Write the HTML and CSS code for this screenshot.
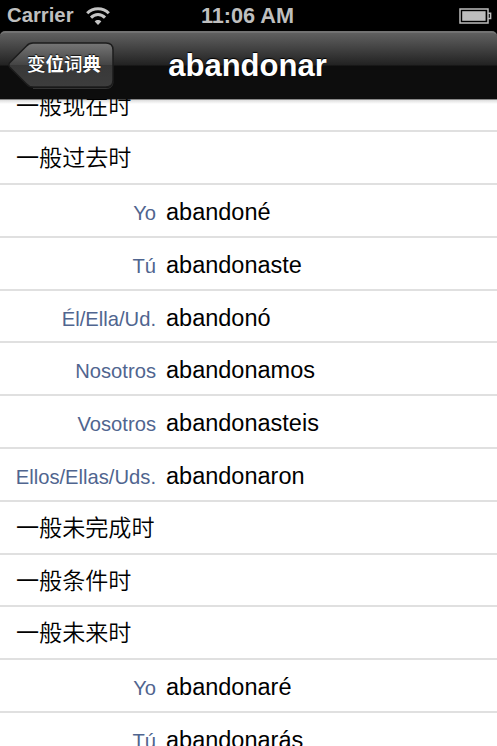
FILE: index.html
```html
<!DOCTYPE html>
<html lang="zh-CN">
  <head>
    <meta charset="UTF-8" />
    <meta name="viewport" content="width=device-width, initial-scale=1.0" />
    <title>abandonar</title>
    <link rel="stylesheet" href="styles.css">
  </head>
  <body>
    <div class="status-bar">
      <div class="carrier">
        <span>Carrier</span>
        <svg class="wifi" viewBox="0 0 24 18">
          <path d="M1.2 6.2C7 .2 17 .2 22.8 6.2" />
          <path d="M5 10.6c4-4.2 10-4.2 14 0" />
          <path class="wifi-dot" d="M12 18l-3.3-3.5c1.8-1.9 4.8-1.9 6.6 0z" />
        </svg>
      </div>
      <div class="clock">11:06 AM</div>
      <svg class="battery" viewBox="0 0 33 16">
        <rect class="outline" x="1" y="1" width="28" height="14" />
        <path class="outline" d="M29 5.2h2.6v5.2H29" />
        <rect class="charge" x="3.2" y="3.2" width="23.4" height="9.6" />
      </svg>
    </div>

    <div class="nav-bar">
      <div class="back-button">
        <svg class="back-shape" viewBox="0 0 108 48">
          <defs>
            <linearGradient id="back-fill" x1="0" y1="0" x2="0" y2="1">
              <stop offset="0" stop-color="#777" />
              <stop offset="0.5" stop-color="#444" />
              <stop offset="0.51" stop-color="#383838" />
              <stop offset="1" stop-color="#3d3d3d" />
            </linearGradient>
          </defs>
          <path class="back-glow" d="M26 46.5h73q7 0 7-7" />
          <path
            class="back-face"
            d="M26 1h73q7 0 7 7v30q0 7-7 7H26q-4 0-6.5-3L2.5 25q-1.5-2 0-4L19.5 4q2.5-3 6.5-3z"
            fill="url(#back-fill)"
          />
        </svg>
        <span class="back-label">变<b>位</b>词<b>典</b></span>
      </div>
      <div class="title">abandonar</div>
    </div>

    <div class="list">
      <div class="row tense">一般现在时</div>
      <div class="row tense">一般过去时</div>
      <div class="row"><span class="person">Yo</span><span class="verb">abandoné</span></div>
      <div class="row"><span class="person">Tú</span><span class="verb">abandonaste</span></div>
      <div class="row"><span class="person">Él/Ella/Ud.</span><span class="verb">abandonó</span></div>
      <div class="row"><span class="person">Nosotros</span><span class="verb">abandonamos</span></div>
      <div class="row"><span class="person">Vosotros</span><span class="verb">abandonasteis</span></div>
      <div class="row"><span class="person">Ellos/Ellas/Uds.</span><span class="verb">abandonaron</span></div>
      <div class="row tense">一般未完成时</div>
      <div class="row tense">一般条件时</div>
      <div class="row tense">一般未来时</div>
      <div class="row"><span class="person">Yo</span><span class="verb">abandonaré</span></div>
      <div class="row"><span class="person">Tú</span><span class="verb">abandonarás</span></div>
    </div>
  </body>
</html>
```

FILE: styles.css
```css
* {
  box-sizing: border-box;
}

body {
  margin: 0;
  height: 100vh;
  display: flex;
  flex-direction: column;
  overflow: hidden;
  background: #000;
  color: #000;
  font-family: "Liberation Sans", "Noto Sans CJK SC", sans-serif;
}

.status-bar {
  flex: none;
  height: 31px;
  padding: 0 5px 0 7px;
  display: grid;
  grid-template-columns: 1fr auto 1fr;
  align-items: center;
  color: #bfbfbf;
  font-weight: bold;
}

.carrier {
  display: flex;
  align-items: center;
  gap: 12px;
  font-size: 20.3px;
}

.wifi {
  width: 24px;
  height: 18px;
  fill: none;
  stroke: #c4c4c4;
  stroke-width: 3;
}

.wifi-dot {
  fill: #c4c4c4;
  stroke: none;
}

.clock {
  margin-right: 4px;
  font-size: 21.7px;
}

.battery {
  width: 33px;
  height: 16px;
  justify-self: end;
}

.outline {
  fill: none;
  stroke: #bdbdbd;
  stroke-width: 1.5;
}

.charge {
  fill: #bdbdbd;
}

.nav-bar {
  flex: none;
  height: 68px;
  padding-left: 7px;
  display: grid;
  grid-template-columns: 107px 1fr 116px;
  align-items: center;
  border-top: 2px solid #737373;
  border-radius: 5px 5px 0 0;
  background: linear-gradient(#606060, #222 32px, #0d0d0d 33px, #0d0d0d);
}

.back-button {
  display: grid;
  width: 108px;
  height: 48px;
}

.back-shape,
.back-label {
  grid-area: 1 / 1;
}

.back-shape {
  width: 108px;
  height: 48px;
}

.back-face {
  stroke: #1c1c1c;
  stroke-width: 1.5;
}

.back-glow {
  fill: none;
  stroke: #333;
}

.back-label {
  padding-left: 20px;
  color: #fff;
  font-family: "Noto Sans CJK SC", sans-serif;
  font-size: 18.5px;
  font-weight: 500;
  line-height: 43px;
  text-shadow: 0 -1px 1px #111;
}

.title {
  color: #fff;
  font-size: 31px;
  font-weight: bold;
  text-align: center;
  text-shadow: 0 -1px 1px #000;
}

.list {
  flex: 1;
  min-height: 0;
  overflow: hidden;
  background: linear-gradient(#888 1px, #ddd 1px, #fff 5px);
}

.row {
  height: 52.8px;
  display: flex;
  align-items: baseline;
  border-bottom: 2px solid #e0e0e0;
  line-height: 54px;
}

.row:first-child {
  margin-top: -19.5px;
}

.tense {
  padding-left: 16px;
  font-family: "Noto Sans CJK SC", sans-serif;
  font-size: 23.1px;
  font-weight: 350;
  line-height: 49px;
}

.person {
  width: 156px;
  color: #50658f;
  font-size: 20.2px;
  text-align: right;
}

.verb {
  padding-left: 10px;
  font-size: 23.5px;
}
```
